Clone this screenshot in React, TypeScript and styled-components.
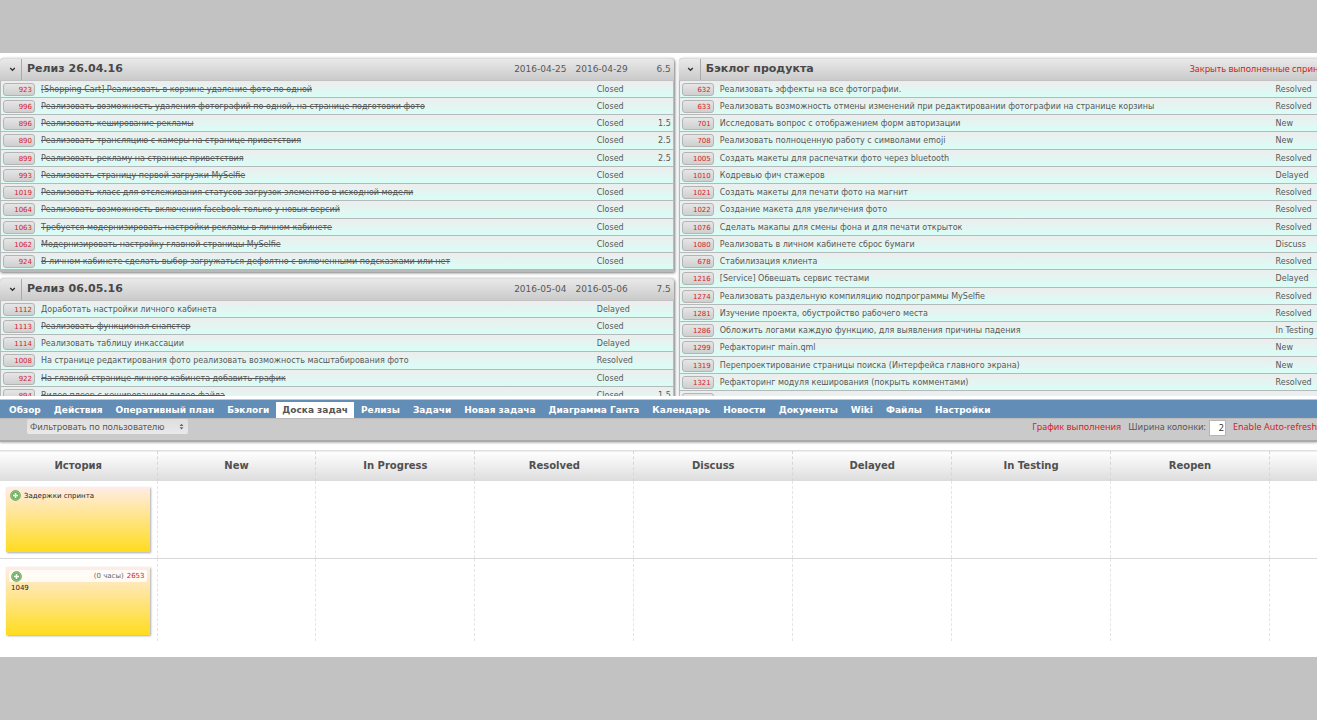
import React from "react";
import styled, { createGlobalStyle } from "styled-components";

const Global = createGlobalStyle`
  * { box-sizing: border-box; }
  body { margin: 0; background: #c2c2c2; color: #585858; font-family: "DejaVu Sans", Verdana, sans-serif; font-size: 8px; overflow-x: hidden; }
  a { color: #d2232a; text-decoration: none; }
  h2, ul { margin: 0; padding: 0; list-style: none; }
  button, input, select { font-family: inherit; color: inherit; }
`;

const Page = styled.div`
  padding: 53px 0;
  overflow: hidden;
`;
const Sheet = styled.main`
  background: #fff;
  padding-bottom: 16px;
`;
const Backlogs = styled.section`
  display: grid;
  grid-template-columns: 1fr 1fr;
  align-items: start;
  gap: 5px;
  width: 102.7%;
  height: 343px;
  padding-top: 5px;
  overflow: hidden;
`;
const Column = styled.div`
  display: flex;
  flex-direction: column;
  gap: 6px;
`;
const Panel = styled.article`
  background: #b9b9b9;
  border-radius: 4px 4px 0 0;
  padding: 0 1px 2px;
  box-shadow: 1px 1px 3px #777;
`;
const PanelHead = styled.header`
  display: flex;
  align-items: center;
  gap: 9px;
  height: 23px;
  padding: 0 3px 2px 0;
  margin: 0 -1px;
  border-top: 1px solid #dcdcdc;
  border-bottom: 1px solid #c2c2c2;
  border-radius: 4px 4px 0 0;
  background: linear-gradient(#e9e9e9, #cacaca);
  font-size: 9px;
  line-height: 18px;
`;
const Toggle = styled.button`
  display: grid;
  place-items: center;
  align-self: stretch;
  width: 22px;
  margin-bottom: -2px;
  padding: 0 0 0 3px;
  border: 0;
  border-right: 1px solid #aaa;
  background: none;
`;
const PanelTitle = styled.h2`
  flex: 1;
  margin-left: -4px;
  font-size: 11px;
  line-height: 18px;
  color: #484848;
`;
const HeadEstimate = styled.span`
  width: 34px;
  text-align: right;
`;
const HeadLink = styled.a`
  padding-right: 20px;
  font-family: "Noto Sans", sans-serif;
`;
const Stories = styled.ul`
  display: grid;
  grid-auto-rows: 17px 17px 17px 18px;
`;
const Story = styled.li`
  display: grid;
  grid-template-columns: 32px 1fr 41px 27px;
  align-items: center;
  column-gap: 6px;
  padding: 0 2px;
  border-bottom: 1px solid #b4bab9;
  background: linear-gradient(#ededed, #d9fdf6);
  white-space: nowrap;
`;
const StoryId = styled.a`
  height: 13px;
  padding-right: 2px;
  border: 1px solid #b4b4b4;
  border-radius: 3px;
  background: linear-gradient(#e6e6e6, #cfcfcf);
  font-size: 7px;
  line-height: 12px;
  text-align: right;
`;
const Subject = styled.span<{ $done: boolean }>`
  text-decoration: ${(p) => (p.$done ? "line-through" : "none")};
`;
const Estimate = styled.span`
  text-align: right;
`;

const Nav = styled.nav`
  display: flex;
  align-items: flex-end;
  gap: 1px;
  height: 19px;
  margin-top: 3px;
  padding-left: 3px;
  border-top: 1px solid #b5cbdf;
  background: #628db6;
`;
const Tab = styled.a<{ $active: boolean }>`
  height: 16px;
  padding: 0 6px;
  background: ${(p) => (p.$active ? "#fff" : "transparent")};
  color: ${(p) => (p.$active ? "#555" : "#fff")};
  font-size: 9px;
  font-weight: bold;
  line-height: 16px;
  white-space: nowrap;
`;
const Toolbar = styled.div`
  display: flex;
  align-items: flex-start;
  gap: 7px;
  height: 24px;
  padding-left: 27px;
  border-top: 1px solid #bbb;
  border-bottom: 2px solid #aaa;
  background: #cacaca;
  box-shadow: 0 1px 2px #bbb;
  font-family: "Noto Sans", sans-serif;
  font-size: 9px;
  line-height: 16px;
  white-space: nowrap;
`;
const FilterBox = styled.div`
  display: grid;
  align-items: center;
  margin-right: auto;
  & > * { grid-area: 1 / 1; }
  & > svg { justify-self: end; margin-right: 4px; pointer-events: none; }
`;
const Filter = styled.select`
  appearance: none;
  width: 161px;
  height: 15px;
  padding: 0 3px;
  border: 0;
  border-radius: 2px;
  background: linear-gradient(#dedede, #e9e9e9);
  font-size: 9px;
`;
const WidthLabel = styled.label`
  display: flex;
  gap: 3px;
`;
const WidthInput = styled.input`
  width: 17px;
  height: 16px;
  margin-top: 1px;
  padding: 0 1px 2px;
  border: 1px solid #b5b5b5;
  background: #fff;
  color: #333;
  font-size: 9px;
  text-align: right;
`;

const Board = styled.table`
  width: 108.5%;
  margin-top: 8px;
  border-collapse: collapse;
  table-layout: fixed;
`;
const ColumnHead = styled.th`
  height: 30px;
  padding: 0;
  border-top: 1px solid #e0e0e0;
  border-right: 1px dashed #d6d6d6;
  background: linear-gradient(#fff, #dcdcdc);
  font-size: 10px;
  color: #505050;
  &:first-child { width: 157px; }
`;
const Cell = styled.td`
  height: 78px;
  padding: 6px;
  border-right: 1px dashed #e4e4e4;
  vertical-align: top;
  tr + tr > & { height: 81px; border-top: 1px solid #d8d8d8; padding-top: 8px; }
`;
const Card = styled.div<{ $tall: boolean }>`
  height: ${(p) => (p.$tall ? 68 : 65)}px;
  padding: 3px;
  margin-right: 1px;
  background: linear-gradient(#ffece6, #ffdc1e);
  box-shadow: 1px 1px 2px #aaa;
  color: #222;
  font-size: 7px;
  line-height: 12px;
`;
const CardHead = styled.div<{ $boxed: boolean }>`
  display: flex;
  align-items: center;
  gap: 3px;
  height: 12px;
  padding: 0 ${(p) => (p.$boxed ? 2 : 1)}px;
  border-radius: 2px;
  background: ${(p) => (p.$boxed ? "rgba(255,255,255,.8)" : "none")};
`;
const Add = styled.button`
  display: flex;
  padding: 0;
  border: 0;
  background: none;
`;
const Hours = styled.span`
  margin-left: auto;
  color: #666;
`;
const CardText = styled.div`
  padding: 0 2px;
`;

type Item = [id: number, subject: string, status: string, estimate?: string];

const sprintOne: Item[] = [
  [923, "[Shopping Cart] Реализовать в корзине удаление фото по одной", "Closed"],
  [996, "Реализовать возможность удаления фотографий по одной, на странице подготовки фото", "Closed"],
  [896, "Реализовать кеширование рекламы", "Closed", "1.5"],
  [890, "Реализовать трансляцию с камеры на странице приветствия", "Closed", "2.5"],
  [899, "Реализовать рекламу на странице приветствия", "Closed", "2.5"],
  [993, "Реализовать страницу первой загрузки MySelfie", "Closed"],
  [1019, "Реализовать класс для отслеживания статусов загрузок элементов в исходной модели", "Closed"],
  [1064, "Реализовать возможность включения facebook только у новых версий", "Closed"],
  [1063, "Требуется модернизировать настройки рекламы в личном кабинете", "Closed"],
  [1062, "Модернизировать настройку главной страницы MySelfie", "Closed"],
  [924, "В личном кабинете сделать выбор загружаться дефолтно с включенными подсказками или нет", "Closed"],
];
const sprintTwo: Item[] = [
  [1112, "Доработать настройки личного кабинета", "Delayed"],
  [1113, "Реализовать функционал снапстер", "Closed"],
  [1114, "Реализовать таблицу инкассации", "Delayed"],
  [1008, "На странице редактирования фото реализовать возможность масштабирования фото", "Resolved"],
  [922, "На главной странице личного кабинета добавить график", "Closed"],
  [894, "Видео плеер с кешированием видео файла", "Closed", "1.5"],
];
const product: Item[] = [
  [632, "Реализовать эффекты на все фотографии.", "Resolved"],
  [633, "Реализовать возможность отмены изменений при редактировании фотографии на странице корзины", "Resolved"],
  [701, "Исследовать вопрос с отображением форм авторизации", "New"],
  [708, "Реализовать полноценную работу с символами emoji", "New"],
  [1005, "Создать макеты для распечатки фото через bluetooth", "Resolved"],
  [1010, "Кодревью фич стажеров", "Delayed"],
  [1021, "Создать макеты для печати фото на магнит", "Resolved"],
  [1022, "Создание макета для увеличения фото", "Resolved"],
  [1076, "Сделать макапы для смены фона и для печати открыток", "Resolved"],
  [1080, "Реализовать в личном кабинете сброс бумаги", "Discuss"],
  [678, "Стабилизация клиента", "Resolved"],
  [1216, "[Service] Обвешать сервис тестами", "Delayed"],
  [1274, "Реализовать раздельную компиляцию подпрограммы MySelfie", "Resolved"],
  [1281, "Изучение проекта, обустройство рабочего места", "Resolved"],
  [1286, "Обложить логами каждую функцию, для выявления причины падения", "In Testing"],
  [1299, "Рефакторинг main.qml", "New"],
  [1319, "Перепроектирование страницы поиска (Интерфейса главного экрана)", "New"],
  [1321, "Рефакторинг модуля кеширования (покрыть комментами)", "Resolved"],
  [0, "", ""],
];
const tabs = ["Обзор", "Действия", "Оперативный план", "Бэклоги", "Доска задач", "Релизы", "Задачи", "Новая задача", "Диаграмма Ганта", "Календарь", "Новости", "Документы", "Wiki", "Файлы", "Настройки"];
const statuses = ["История", "New", "In Progress", "Resolved", "Discuss", "Delayed", "In Testing", "Reopen", ""];

const Chevron = () => (
  <svg width="7" height="5" viewBox="0 0 7 5" aria-hidden="true">
    <path d="M1.2 1 3.5 3.3 5.8 1" fill="none" stroke="#333" strokeWidth="1.3" />
  </svg>
);
const Plus = () => (
  <svg width="11" height="11" viewBox="0 0 11 11" aria-hidden="true">
    <circle cx="5.5" cy="5.5" r="4.9" fill="#6db35f" stroke="#539a48" strokeWidth=".7" />
    <circle cx="5.5" cy="5.5" r="4.1" fill="none" stroke="#a5d39b" strokeWidth=".6" />
    <path d="M5.5 3v5M3 5.5h5" stroke="#fff" strokeWidth="1.6" />
  </svg>
);

function StoryList({ items }: { items: Item[] }) {
  return (
    <Stories>
      {items.map(([id, subject, status, estimate]) => (
        <Story key={id}>
          <StoryId href={`#${id}`}>{id || null}</StoryId>
          <Subject $done={status === "Closed"}>{subject}</Subject>
          <span>{status}</span>
          <Estimate>{estimate}</Estimate>
        </Story>
      ))}
    </Stories>
  );
}

function Sprint({ title, from, to, total, items }: { title: string; from: string; to: string; total: string; items: Item[] }) {
  return (
    <Panel>
      <PanelHead>
        <Toggle aria-label={title}><Chevron /></Toggle>
        <PanelTitle>{title}</PanelTitle>
        <span>{from}</span>
        <span>{to}</span>
        <HeadEstimate>{total}</HeadEstimate>
      </PanelHead>
      <StoryList items={items} />
    </Panel>
  );
}

export default function App() {
  return (
    <Page>
      <Global />
      <Sheet>
        <Backlogs>
          <Column>
            <Sprint title="Релиз 26.04.16" from="2016-04-25" to="2016-04-29" total="6.5" items={sprintOne} />
            <Sprint title="Релиз 06.05.16" from="2016-05-04" to="2016-05-06" total="7.5" items={sprintTwo} />
          </Column>
          <Panel>
            <PanelHead>
              <Toggle aria-label="Бэклог продукта"><Chevron /></Toggle>
              <PanelTitle>Бэклог продукта</PanelTitle>
              <HeadLink href="#close">Закрыть выполненные спринты</HeadLink>
            </PanelHead>
            <StoryList items={product} />
          </Panel>
        </Backlogs>
        <Nav>
          {tabs.map((t) => (
            <Tab key={t} href="#tab" $active={t === "Доска задач"}>{t}</Tab>
          ))}
        </Nav>
        <Toolbar>
          <FilterBox>
            <Filter aria-label="Фильтровать по пользователю">
              <option>Фильтровать по пользователю</option>
            </Filter>
            <svg width="5" height="7" viewBox="0 0 5 7" aria-hidden="true">
              <path d="M.5 3 2.5.8 4.5 3zM.5 4.2l2 2.2 2-2.2z" fill="#666" />
            </svg>
          </FilterBox>
          <a href="#chart">График выполнения</a>
          <WidthLabel>
            Ширина колонки:
            <WidthInput defaultValue="2" />
          </WidthLabel>
          <a href="#refresh">Enable Auto-refresh</a>
        </Toolbar>
        <Board>
          <thead>
            <tr>{statuses.map((s) => <ColumnHead key={s}>{s}</ColumnHead>)}</tr>
          </thead>
          <tbody>
            <tr>
              <Cell>
                <Card $tall={false}>
                  <CardHead $boxed={false}>
                    <Add aria-label="Добавить"><Plus /></Add>
                    Задержки спринта
                  </CardHead>
                </Card>
              </Cell>
              {statuses.slice(1).map((s) => <Cell key={s} />)}
            </tr>
            <tr>
              <Cell>
                <Card $tall>
                  <CardHead $boxed>
                    <Add aria-label="Добавить"><Plus /></Add>
                    <Hours>(0 часы)</Hours>
                    <a href="#2653">2653</a>
                  </CardHead>
                  <CardText>1049</CardText>
                </Card>
              </Cell>
              {statuses.slice(1).map((s) => <Cell key={s} />)}
            </tr>
          </tbody>
        </Board>
      </Sheet>
    </Page>
  );
}
